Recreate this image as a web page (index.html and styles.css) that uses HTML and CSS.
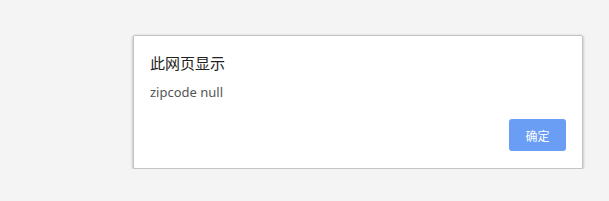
FILE: index.html
```html
<!DOCTYPE html>
<html lang="zh-CN">
<head>
    <meta charset="UTF-8">
    <title>此网页显示</title>
    <link rel="stylesheet" href="styles.css">
</head>
<body>
    <div class="dialog">
        <div class="dialog-title">此网页显示</div>
        <div class="dialog-message">zipcode null</div>
        <div class="dialog-buttons">
            <button class="btn-ok">确定</button>
        </div>
    </div>
</body>
</html>
```

FILE: styles.css
```css
body {
    margin: 0;
    background-color: #f4f4f4;
    font-family: "Noto Sans", "Noto Sans CJK SC", sans-serif;
}

.dialog {
    width: 416px;
    margin: 35px 0 0 133px;
    padding: 17px 16px 17px 16px;
    background-color: #fff;
    border: 1px solid #c4c4c4;
    border-radius: 2px;
    box-shadow: 0 1px 3px rgba(0, 0, 0, 0.35);
}

.dialog-title {
    font-size: 15px;
    line-height: 20px;
    color: #222;
}

.dialog-message {
    margin-top: 10px;
    font-size: 13px;
    line-height: 18px;
    color: #555;
}

.dialog-buttons {
    display: flex;
    justify-content: flex-end;
    margin-top: 18px;
}

.btn-ok {
    width: 57px;
    height: 32px;
    border: none;
    border-radius: 3px;
    background-color: #699ef4;
    color: #fff;
    font-family: "Noto Sans CJK SC", sans-serif;
    font-size: 12px;
}
```
